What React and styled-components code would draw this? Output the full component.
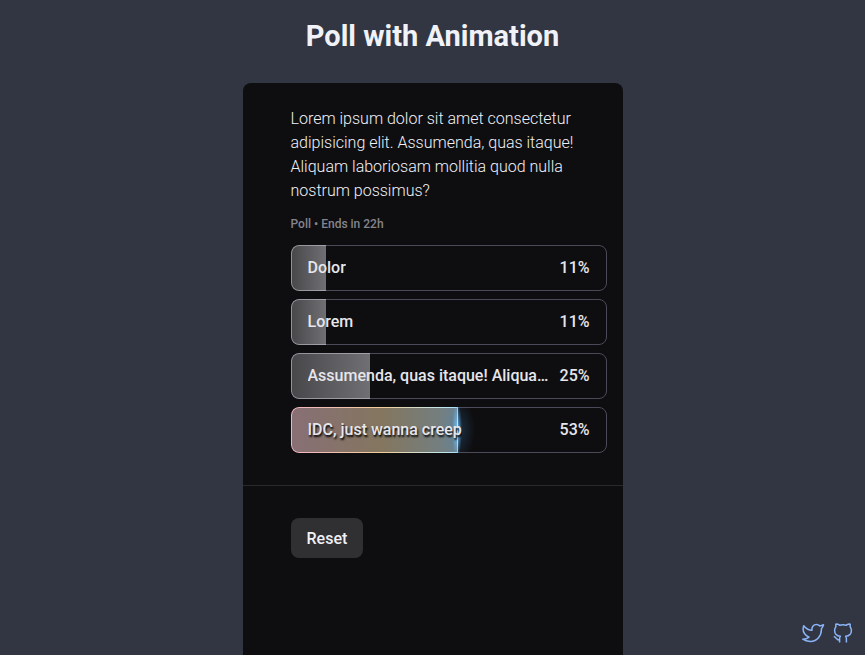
import styled, { createGlobalStyle } from "styled-components";

const options = [
    { text: "Dolor", votes: 4 },
    { text: "Lorem", votes: 4 },
    { text: "Assumenda, quas itaque! Aliquam laboriosam", votes: 9 },
    { text: "IDC, just wanna creep", votes: 19, chosen: true },
]

const total = options.reduce((sum, option) => sum + option.votes, 0)

export default function App() {
    return (
        <>
            <GlobalStyle />
            <Page>
                <Title>Poll with Animation</Title>
                <Card>
                    <Poll>
                        <Question>Lorem ipsum dolor sit amet consectetur adipisicing elit. Assumenda, quas itaque! Aliquam laboriosam mollitia quod nulla nostrum possimus?</Question>
                        <Info>Poll • Ends in 22h</Info>
                        <Options>
                            {options.map((value, index) => <RenderOption key={index} value={value} />)}
                        </Options>
                    </Poll>
                    <Actions>
                        <Reset type="button">Reset</Reset>
                    </Actions>
                </Card>
            </Page>
            <Social>
                <a href="#twitter" aria-label="Twitter">
                    <Icon viewBox="0 0 24 24">
                        <path d="M2.7 4.7C4.8 7.5 7.8 9.1 11 9.3C10.5 6.2 12.4 3.5 15.4 3.5C17 3.5 18 4.1 18.8 4.9C20.2 4.7 21.3 4.3 22.5 3.8C22.1 5.3 21.4 6.7 20.4 7.8C20.7 14.8 16 20.4 9.4 20.4C6.4 20.4 3.8 19.7 1.8 18.2C4.3 18.2 6.3 17.5 8 16.1C3.2 13.8 1.2 9.4 2.7 4.7Z" />
                    </Icon>
                </a>
                <a href="#github" aria-label="GitHub">
                    <Icon viewBox="0 0 24 24">
                        <path d="M15.4 21.5V17.6C15.4 16.6 15.2 15.9 14.6 15.3C18 14.9 20.4 13.4 20.4 9.4C20.4 8 20 6.7 19.1 5.7C19.4 4.7 19.3 3.7 18.9 2.9C17.7 2.9 16.5 3.3 15.4 4.2C13.2 3.6 10.8 3.6 8.6 4.2C7.5 3.3 6.3 2.9 5.1 2.9C4.7 3.7 4.6 4.7 4.9 5.7C4 6.7 3.6 8 3.6 9.4C3.6 13.4 6 14.9 9.4 15.3C8.8 15.9 8.6 16.6 8.6 17.6V21.5M8.6 19C5.6 19.4 5.6 16.2 2.8 15.6" />
                    </Icon>
                </a>
            </Social>
        </>
    )
}

function RenderOption({ value }) {
    const percent = value.votes / total * 100
    return (
        <Option type="button">
            <Track>
                <Bar $chosen={value.chosen} style={{ width: `${percent}%` }}>
                    {value.chosen ? <Glow /> : <></>}
                </Bar>
            </Track>
            <Label $chosen={value.chosen}>{value.text}</Label>
            <Percent>{Math.round(percent)}%</Percent>
        </Option>
    )
}

const GlobalStyle = createGlobalStyle`
* {
    box-sizing: border-box;
}

body {
    margin: 0;
    background: #323642;
    color: #f1f1f8;
    font-family: Roboto, sans-serif;
}

button {
    font-family: inherit;
    color: inherit;
    cursor: pointer;
}
`

const Page = styled.main`
min-height: 100vh;
display: flex;
flex-direction: column;
align-items: center;
`

const Title = styled.h1`
margin: 16px 0 27px;
font-size: 29px;
line-height: 40px;
font-weight: 700;
`

const Card = styled.section`
width: 100%;
max-width: 380px;
flex: 1;
background: #0e0e10;
border-radius: 8px 8px 0 0;
`

const Poll = styled.div`
padding: 24px 16px 32px 48px;
border-bottom: 1px solid #2a2a2e;
`

const Question = styled.p`
margin: 0;
font-size: 16px;
line-height: 24px;
font-weight: 300;
`

const Info = styled.p`
margin: 12px 0;
font-size: 12px;
line-height: 18px;
font-weight: 500;
color: #84848c;
`

const Options = styled.div`
display: flex;
flex-direction: column;
gap: 8px;
`

const Option = styled.button`
position: relative;
display: flex;
align-items: center;
justify-content: space-between;
gap: 8px;
width: 100%;
height: 46px;
padding: 0 16px;
background: transparent;
border: 1px solid #4b4a58;
border-radius: 8px;
color: #e6e6ec;
font-size: 16px;
font-weight: 500;
text-align: left;
`

const Track = styled.span`
position: absolute;
inset: -1px;
border-radius: 8px;
overflow: hidden;
`

const Bar = styled.span`
position: relative;
display: block;
height: 100%;
border: 1px solid transparent;
border-right: 0;
border-radius: 8px 0 0 8px;
background: ${({ $chosen }) => $chosen
        ? "linear-gradient(90deg, #886f75, #84765f 55%, #6f8189) padding-box, linear-gradient(90deg, #f4b3c4, #f0cf98 55%, #b5ecff) border-box"
        : "linear-gradient(90deg, #48484b, #707074) padding-box, linear-gradient(90deg, #929298, #a2a2a8) border-box"};
`

const Glow = styled.span`
position: absolute;
top: -1px;
bottom: -1px;
right: -20px;
width: 40px;
background:
    linear-gradient(180deg, #8cc8f0, #d8f2ff 50%, #8cc8f0) 20px 0 / 1px 100% no-repeat,
    radial-gradient(ellipse 5px 28px, #6dbcf5, transparent),
    radial-gradient(ellipse 18px 32px, #3f86c24d, transparent);
`

const Label = styled.span`
position: relative;
min-width: 0;
overflow: hidden;
white-space: nowrap;
text-overflow: ellipsis;
line-height: 24px;
text-shadow: ${({ $chosen }) => $chosen ? "1px 2px 2px #000000" : "none"};
`

const Percent = styled.span`
position: relative;
line-height: 24px;
`

const Actions = styled.div`
padding: 32px 48px;
`

const Reset = styled.button`
height: 40px;
padding: 0 16px;
border: 0;
border-radius: 8px;
background: #303033;
font-size: 16px;
font-weight: 500;
`

const Social = styled.nav`
position: fixed;
right: 10px;
bottom: 10px;
display: flex;
gap: 6px;

a {
    display: flex;
    color: #8ab4f8;
}
`

const Icon = styled.svg`
width: 24px;
height: 24px;
fill: none;
stroke: currentColor;
stroke-width: 1.5;
stroke-linecap: butt;
stroke-linejoin: round;
`
